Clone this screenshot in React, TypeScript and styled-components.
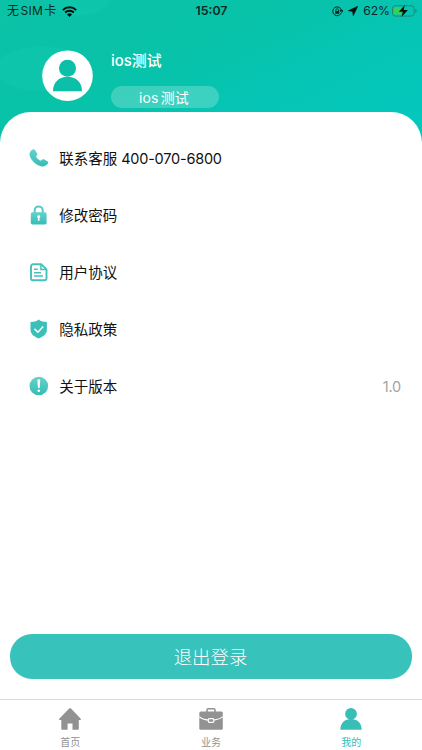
import React from 'react';
import styled, { createGlobalStyle } from 'styled-components';

const Global = createGlobalStyle`
  * { box-sizing: border-box; }
  body { margin: 0; background: #fff; }
  svg { display: block; flex: none; }
`;

const Screen = styled.div`
  width: 422px;
  height: 750px;
  display: flex;
  flex-direction: column;
  overflow: hidden;
  background: #fff;
  font-family: Inter, 'Noto Sans CJK SC', sans-serif;
  color: #111;
`;

const Header = styled.header`
  height: 142px;
  flex: none;
  background:
    radial-gradient(ellipse 50px 23px at 43px 69px, rgba(20, 205, 178, 0.32) 92%, transparent 100%),
    radial-gradient(ellipse 30px 16px at 80px 0px, rgba(20, 205, 178, 0.32) 90%, transparent 100%),
    linear-gradient(155deg, #0cc2a6 0%, #08c2a9 40%, #05c5b4 65%, #04c8c0 100%);
`;

const StatusBar = styled.div`
  height: 22px;
  display: grid;
  grid-template-columns: 1fr auto 1fr;
  align-items: center;
  padding: 0 5px 0 7px;
  font-size: 12px;
  line-height: 22px;
  color: #0b2924;
`;

const StatusGroup = styled.div<{ $end?: boolean }>`
  display: flex;
  align-items: center;
  justify-content: ${(p) => (p.$end ? 'flex-end' : 'flex-start')};
  gap: 5px;
  white-space: nowrap;
`;

const Carrier = styled.span`
  letter-spacing: 0.2px;
  word-spacing: -2.2px;
`;

const Clock = styled.span`
  font-size: 12.3px;
  font-weight: 600;
  padding-right: 1px;
`;

const Percent = styled.span`
  font-size: 12.2px;
  letter-spacing: -0.1px;
  margin-right: -3px;
`;

const Profile = styled.div`
  display: flex;
  align-items: flex-start;
  padding: 28px 0 0 42px;
  gap: 18px;
`;

const Identity = styled.div`
  display: flex;
  flex-direction: column;
  color: #fff;
`;

const UserName = styled.div`
  height: 20px;
  line-height: 22px;
  font-size: 14.9px;
  font-weight: 500;
`;

const Badge = styled.div`
  margin-top: 16px;
  width: 108px;
  height: 22px;
  border-radius: 11px;
  background: rgba(255, 255, 255, 0.22);
  line-height: 23px;
  text-align: center;
  font-size: 14px;
  letter-spacing: 0.2px;
  word-spacing: -2.2px;
  padding-right: 2px;
`;

const Panel = styled.main`
  flex: 1;
  margin-top: -30px;
  padding-top: 18px;
  border-radius: 31px 31px 0 0;
  background: #fff;
  display: flex;
  flex-direction: column;
`;

const Row = styled.div`
  height: 57px;
  padding: 0 21px 1px 29px;
  display: flex;
  align-items: center;
  font-size: 14.5px;
  line-height: 20px;
`;

const RowLabel = styled.span`
  margin-left: 10.3px;
  padding-top: 2px;
  flex: 1;
`;

const PhoneNumber = styled.span`
  letter-spacing: -0.22px;
`;

const RowValue = styled.span`
  padding-top: 2px;
  color: #a3a3a3;
  letter-spacing: -0.2px;
`;

const LogoutButton = styled.button`
  margin: auto 10px 20px 10px;
  height: 45px;
  flex: none;
  border: 0;
  padding: 1px 1px 0 0;
  border-radius: 22px;
  background: #38c2bc;
  color: #fff;
  font: 300 18.4px/44px Inter, 'Noto Sans CJK SC', sans-serif;
`;

const TabBar = styled.nav`
  height: 51px;
  flex: none;
  border-top: 1px solid #d9d9d9;
  display: grid;
  grid-template-columns: repeat(3, 1fr);
`;

const Tab = styled.div<{ $active?: boolean }>`
  display: flex;
  flex-direction: column;
  align-items: center;
  padding: 7px ${(p) => (p.$active ? '1px' : '0')} 0 0;
  gap: 4px;
  font-size: 10px;
  line-height: 14px;
  color: ${(p) => (p.$active ? '#38bdb7' : '#929292')};
`;

const Avatar = () => (
  <svg width="51" height="51" viewBox="0 0 51 51">
    <circle cx="25.5" cy="25.7" r="25.3" fill="#fff" />
    <circle cx="25.5" cy="18.2" r="8.5" fill="#0cbfa9" />
    <path d="M11 41.2C11 31.8 17.5 26.8 25.5 26.8S40 31.8 40 41.2Z" fill="#0cbfa9" />
  </svg>
);

const Wifi = () => (
  <svg width="15" height="11" viewBox="0 0 15 11" fill="none" stroke="#06110f" strokeWidth="2">
    <path d="M.8 4.1a9.5 9.5 0 0 1 13.4 0M3.1 6.5a6.2 6.2 0 0 1 8.8 0" />
    <path d="M7.5 11 5 8.5a3.5 3.5 0 0 1 5 0Z" fill="#06110f" stroke="none" />
  </svg>
);

const RotationLock = () => (
  <svg width="11" height="11" viewBox="0 0 11 11" fill="none" stroke="#0b2924">
    <path d="M9.4 6.5A4.4 4.4 0 1 1 9.5 4.5M8 4.5h3L9.6 6.5Z" />
    <path d="M3.9 5V4a1.3 1.3 0 0 1 2.6 0v1" strokeWidth=".8" />
    <rect x="3.2" y="4.9" width="4" height="2.9" rx=".3" fill="#0b2924" stroke="none" />
  </svg>
);

const Location = () => (
  <svg width="10" height="10" viewBox="0 0 10 10">
    <path d="M10 0 0 4.8 4.5 5.5 5.2 10Z" fill="#06110f" stroke="#06110f" strokeWidth=".4" />
  </svg>
);

const Battery = () => (
  <svg width="25" height="12" viewBox="0 0 25 12">
    <rect x=".5" y=".7" width="21.6" height="10.4" rx="2.8" fill="none" stroke="#22877a" />
    <path d="M3.5 2.2H9v7.4H3.5A1.5 1.5 0 0 1 2 8.1V3.7a1.5 1.5 0 0 1 1.5-1.5Z" fill="#35d15b" />
    <path d="M23.3 4v4c1.7-.7 1.7-3.3 0-4Z" fill="#22877a" />
    <path d="M12.8 0 6.8 6.7h4L9.5 12l6.4-6.9h-4.2Z" fill="#06110f" />
  </svg>
);

const IconGradient = ({ id }: { id: string }) => (
  <defs>
    <linearGradient id={id} x1="0" y1="0" x2="0" y2="1">
      <stop offset="0" stopColor="#66d2cc" />
      <stop offset="1" stopColor="#36bcb5" />
    </linearGradient>
  </defs>
);

const PhoneIcon = () => (
  <svg width="20" height="20" viewBox="0 0 20 20">
    <IconGradient id="phone" />
    <path
      fill="url(#phone)"
      d="M2.9 1.9C4.300 1 5.500 1.200 6.300 2.400L8 5.300c.6 1 .4 1.800-.4 2.500-.6.5-.6.900-.2 1.500 1 1.400 2.100 2.300 3.600 3.100.7.3 1.100.2 1.700-.4.7-.8 1.600-.9 2.600-.4l3 1.700c1 .6 1.200 1.400.6 2.300-1.400 2.300-4.100 3.500-7 2.600C6.700 16.700 2.200 12.700.7 7.500.1 5.100.9 3.200 2.900 1.900Z"
    />
  </svg>
);

const LockIcon = () => (
  <svg width="20" height="20" viewBox="0 0 20 20">
    <IconGradient id="lock" />
    <path d="M5.700 8.500V5.400a4 4 0 0 1 8 0v3.100" fill="none" stroke="#58cbc5" strokeWidth="2" />
    <rect x="1.800" y="7.200" width="15.800" height="12.300" rx="1.800" fill="url(#lock)" />
    <path d="M9.700 10.200a1.500 1.500 0 0 1 .8 2.800v2.700H8.900V13a1.500 1.500 0 0 1 .8-2.800Z" fill="#fff" />
  </svg>
);

const DocumentIcon = () => (
  <svg width="20" height="20" viewBox="0 0 20 20" fill="none" stroke="#45c1bb" strokeWidth="1.9">
    <path d="M4 2.300h8.200l5.300 5v8.900a2 2 0 0 1-2 2H4a2 2 0 0 1-2-2V4.300a2 2 0 0 1 2-2Z" />
    <path d="M11.900 2.600v5h5.300M5 7.300h3.700M5 10.700h7M5 14.100h9" strokeWidth="1.5" />
  </svg>
);

const ShieldIcon = () => (
  <svg width="20" height="20" viewBox="0 0 20 20">
    <path
      d="M9.700.5c2.300 1.800 4.600 2.500 8.200 2.500v7.700c0 4.100-3.300 6.800-8.200 8.700-4.900-1.900-8.200-4.600-8.200-8.700V3c3.600 0 5.900-.7 8.200-2.500Z"
      fill="#3bbfb9"
    />
    <path d="m5.500 9.900 3.400 3.300 5.300-5.800" fill="none" stroke="#fff" strokeWidth="1.5" />
  </svg>
);

const AboutIcon = () => (
  <svg width="20" height="20" viewBox="0 0 20 20">
    <IconGradient id="about" />
    <circle cx="9.8" cy="10" r="9.3" fill="url(#about)" />
    <path d="M8.4 4.7a1.4 1.4 0 0 1 2.8 0l-.6 7.2H9Z" fill="#fff" />
    <circle cx="9.8" cy="14.8" r="1.3" fill="#fff" />
  </svg>
);

const HomeIcon = () => (
  <svg width="24" height="24" viewBox="0 0 24 24">
    <path
      d="M11.200 1.500c.6-.5 1.200-.5 1.800 0l9.500 10c.7.8.4 1.500-.5 1.500h-1.200v8.500c0 1-.4 1.300-1.400 1.300h-4.900V16.500H9.600v6.300H4.700c-1 0-1.400-.3-1.400-1.300V13H2c-.9 0-1.200-.7-.5-1.500Z"
      fill="#929292"
    />
  </svg>
);

const BriefcaseIcon = () => (
  <svg width="24" height="24" viewBox="0 0 24 24">
    <path d="M8 5V3.300C8 2.100 8.400 1.700 9.300 1.700h5.400c.9 0 1.300.4 1.300 1.600V5" fill="none" stroke="#929292" strokeWidth="1.6" />
    <rect x=".3" y="4.600" width="23.500" height="18.200" rx="1.500" fill="#929292" />
    <path d="M.3 9.700c2 1.800 5 3 9 3.500M23.800 9.700c-2 1.800-5 3-9 3.500" fill="none" stroke="#fff" strokeWidth="1.2" />
    <rect x="9.300" y="11.700" width="5.500" height="3.600" rx="1" fill="#929292" stroke="#fff" strokeWidth="1.2" />
  </svg>
);

const PersonIcon = () => (
  <svg width="24" height="24" viewBox="0 0 24 24">
    <circle cx="12" cy="6.9" r="5.9" fill="#38bdb7" />
    <path d="M1.300 22.700C1.500 15.800 5.800 12 12 12s10.500 3.800 10.700 10.700Z" fill="#38bdb7" />
  </svg>
);

const menu = [
  { label: '联系客服', phone: '400-070-6800', Icon: PhoneIcon },
  { label: '修改密码', Icon: LockIcon },
  { label: '用户协议', Icon: DocumentIcon },
  { label: '隐私政策', Icon: ShieldIcon },
  { label: '关于版本', Icon: AboutIcon, value: '1.0' },
];

const tabs = [
  { label: '首页', Icon: HomeIcon },
  { label: '业务', Icon: BriefcaseIcon },
  { label: '我的', Icon: PersonIcon, active: true },
];

export default function App() {
  return (
    <>
      <Global />
      <Screen>
        <Header>
          <StatusBar>
            <StatusGroup>
              <Carrier>无 SIM 卡</Carrier>
              <Wifi />
            </StatusGroup>
            <Clock>15:07</Clock>
            <StatusGroup $end>
              <RotationLock />
              <Location />
              <Percent>62%</Percent>
              <Battery />
            </StatusGroup>
          </StatusBar>
          <Profile>
            <Avatar />
            <Identity>
              <UserName>ios测试</UserName>
              <Badge>ios 测试</Badge>
            </Identity>
          </Profile>
        </Header>
        <Panel>
          {menu.map(({ label, phone, Icon, value }) => (
            <Row key={label}>
              <Icon />
              <RowLabel>
                {label}
                {phone && <PhoneNumber> {phone}</PhoneNumber>}
              </RowLabel>
              {value && <RowValue>{value}</RowValue>}
            </Row>
          ))}
          <LogoutButton>退出登录</LogoutButton>
        </Panel>
        <TabBar>
          {tabs.map(({ label, Icon, active }) => (
            <Tab key={label} $active={active}>
              <Icon />
              <span>{label}</span>
            </Tab>
          ))}
        </TabBar>
      </Screen>
    </>
  );
}
